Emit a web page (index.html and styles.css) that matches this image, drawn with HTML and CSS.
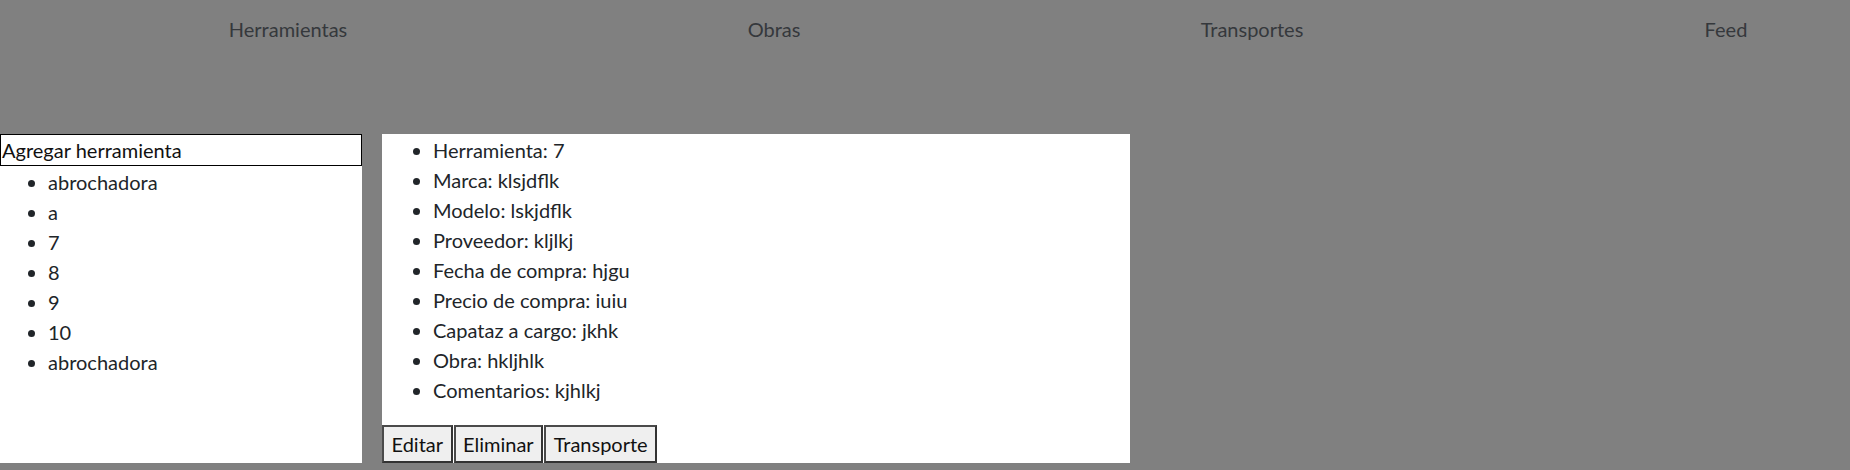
FILE: index.html
```html
<!DOCTYPE html>
<html lang="es">
<head>
<meta charset="utf-8">
<title>Herramientas</title>
<link rel="stylesheet" href="styles.css">
</head>
<body>
<nav class="topnav">
  <a class="nav-link" href="#">Herramientas</a>
  <a class="nav-link" href="#">Obras</a>
  <a class="nav-link" href="#">Transportes</a>
  <a class="nav-link nav-link-last" href="#">Feed</a>
</nav>
<main class="content">
  <section class="panel panel-list">
    <button class="add-btn" type="button">Agregar herramienta</button>
    <ul class="tool-list">
      <li>abrochadora</li>
      <li>a</li>
      <li>7</li>
      <li>8</li>
      <li>9</li>
      <li>10</li>
      <li>abrochadora</li>
    </ul>
  </section>
  <section class="panel panel-detail">
    <ul class="detail-list">
      <li>Herramienta: 7</li>
      <li>Marca: klsjdflk</li>
      <li>Modelo: lskjdflk</li>
      <li>Proveedor: kljlkj</li>
      <li>Fecha de compra: hjgu</li>
      <li>Precio de compra: iuiu</li>
      <li>Capataz a cargo: jkhk</li>
      <li>Obra: hkljhlk</li>
      <li>Comentarios: kjhlkj</li>
    </ul>
    <div class="actions">
      <button class="act-btn" type="button">Editar</button>
      <button class="act-btn" type="button">Eliminar</button>
      <button class="act-btn" type="button">Transporte</button>
    </div>
  </section>
</main>
</body>
</html>
```

FILE: styles.css
```css
html {
  background: #808080;
}
body {
  margin: 0;
  padding-bottom: 8px;
  font-family: Lato, "Liberation Sans", sans-serif;
  font-size: 20px;
  line-height: 30px;
  color: #212529;
}
.topnav {
  display: grid;
  grid-template-columns: 576px 396px 560px 1fr;
  padding-top: 14px;
  height: 30px;
}
.nav-link {
  justify-self: center;
  color: #35383c;
  text-decoration: none;
}
.nav-link-last {
  padding-left: 70px;
}
.content {
  display: flex;
  align-items: stretch;
  gap: 20px;
  margin-top: 90px;
}
.panel {
  background: #fff;
}
.panel-list {
  width: 362px;
}
.panel-detail {
  width: 748px;
}
.add-btn {
  display: block;
  width: 100%;
  box-sizing: border-box;
  height: 32px;
  margin: 0;
  padding: 0 1px;
  border: 1px solid #000;
  background: #fff;
  color: #111;
  font: inherit;
  line-height: 30px;
  text-align: left;
}
.tool-list {
  margin: 1px 0 0;
  padding-left: 48px;
}
.detail-list {
  margin: 1px 0 20px;
  padding-left: 51px;
}
.actions {
  display: flex;
  gap: 1px;
}
.act-btn {
  margin: 0;
  padding: 2px 7.5px;
  border: 2px solid #333;
  border-top-color: #4a4a4a;
  border-left-color: #4a4a4a;
  background: #efefef;
  color: #111;
  font: inherit;
  line-height: 30px;
}
```
